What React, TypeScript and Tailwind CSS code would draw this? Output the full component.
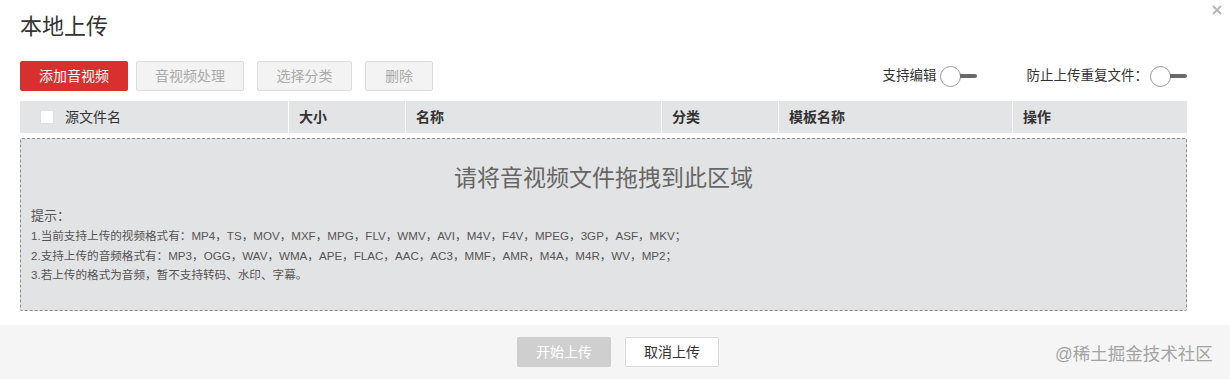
import React from "react"

const font = "font-['Liberation_Sans','Noto_Sans_CJK_SC',sans-serif]"

function Toggle() {
	return (
		<div className="flex flex-row items-center">
			<div className="w-[21px] h-[21px] rounded-full border border-[#9a9a9a] bg-white"></div>
			<div className="w-[17px] h-[4px] bg-[#6a6a6a] rounded-r-full -ml-[1px]"></div>
		</div>
	)
}

const columns = [
	{ label: "大小", w: "w-[117px]" },
	{ label: "名称", w: "w-[256px]" },
	{ label: "分类", w: "w-[117px]" },
	{ label: "模板名称", w: "w-[234px]" },
	{ label: "操作", w: "w-[175px]" },
]

export default function App() {
	return (
		<div className={`relative w-[1230px] h-[379px] bg-white overflow-hidden ${font}`}>
			<svg className="absolute left-[1212px] top-[5px]" width="10" height="10" viewBox="0 0 10 10">
				<path d="M1 1 L9 9 M9 1 L1 9" stroke="#b8b8b8" strokeWidth="2" />
			</svg>

			<div className="pl-[20px] pr-[43px]">
				<h1 className="pt-[12px] h-[41px] text-[22px] leading-[30px] text-[#333] font-normal">本地上传</h1>

				<div className="flex flex-row items-center mt-[20px] h-[30px]">
					<button className="w-[108px] h-[30px] rounded-[2px] bg-[#d7302e] text-white text-[14px]">添加音视频</button>
					<button className="ml-[8px] w-[108px] h-[30px] rounded-[2px] border border-[#dcdcdc] bg-[#f3f3f3] text-[#aaa] text-[14px]">音视频处理</button>
					<button className="ml-[13px] w-[95px] h-[30px] rounded-[2px] border border-[#dcdcdc] bg-[#f3f3f3] text-[#aaa] text-[14px]">选择分类</button>
					<button className="ml-[13px] w-[68px] h-[30px] rounded-[2px] border border-[#dcdcdc] bg-[#f3f3f3] text-[#aaa] text-[14px]">删除</button>
					<div className="flex-1"></div>
					<span className="text-[13.5px] text-[#333]">支持编辑</span>
					<div className="ml-[3px]">
						<Toggle />
					</div>
					<span className="ml-[50px] text-[13.5px] text-[#333]">防止上传重复文件：</span>
					<div className="ml-[2px]">
						<Toggle />
					</div>
				</div>

				<div className="flex flex-row mt-[10px] h-[32px] bg-[#e3e4e5] text-[14px] text-[#333]">
					<div className="w-[268px] flex flex-row items-center pl-[20px]">
						<div className="w-[14px] h-[14px] bg-white border border-[#e0e0e0]"></div>
						<span className="ml-[11px]">源文件名</span>
					</div>
					{columns.map((c) => (
						<div key={c.label} className={`${c.w} flex items-center pl-[10px] border-l border-white font-bold`}>
							{c.label}
						</div>
					))}
				</div>

				<div className="mt-[5px] h-[173px] border border-dashed border-[#8f8f8f] rounded-[2px] bg-[#e2e3e4]">
					<div className="pt-[23px] text-center text-[23px] leading-[32px] text-[#666]">请将音视频文件拖拽到此区域</div>
					<div className="mt-[12px] pl-[10px] text-[#555]">
						<div className="text-[13px] leading-[20px]">提示：</div>
						<div className="text-[11.6px] leading-[19.5px]">1.当前支持上传的视频格式有：MP4，TS，MOV，MXF，MPG，FLV，WMV，AVI，M4V，F4V，MPEG，3GP，ASF，MKV；</div>
						<div className="text-[11.6px] leading-[19.5px]">2.支持上传的音频格式有：MP3，OGG，WAV，WMA，APE，FLAC，AAC，AC3，MMF，AMR，M4A，M4R，WV，MP2；</div>
						<div className="text-[11.6px] leading-[19.5px]">3.若上传的格式为音频，暂不支持转码、水印、字幕。</div>
					</div>
				</div>
			</div>

			<div className="mt-[14px] h-[54px] bg-[#f5f5f5] flex flex-row items-center justify-center gap-[14px] pl-[6px]">
				<button className="w-[94px] h-[30px] rounded-[2px] bg-[#cfcfcf] text-white text-[14px]">开始上传</button>
				<button className="w-[94px] h-[30px] rounded-[2px] bg-white border border-[#dcdcdc] text-[#333] text-[14px]">取消上传</button>
			</div>

			<div className="absolute left-[1055px] top-[343px] text-[17.5px] leading-[22px] text-[#a3a3a3]">@稀土掘金技术社区</div>
		</div>
	)
}
